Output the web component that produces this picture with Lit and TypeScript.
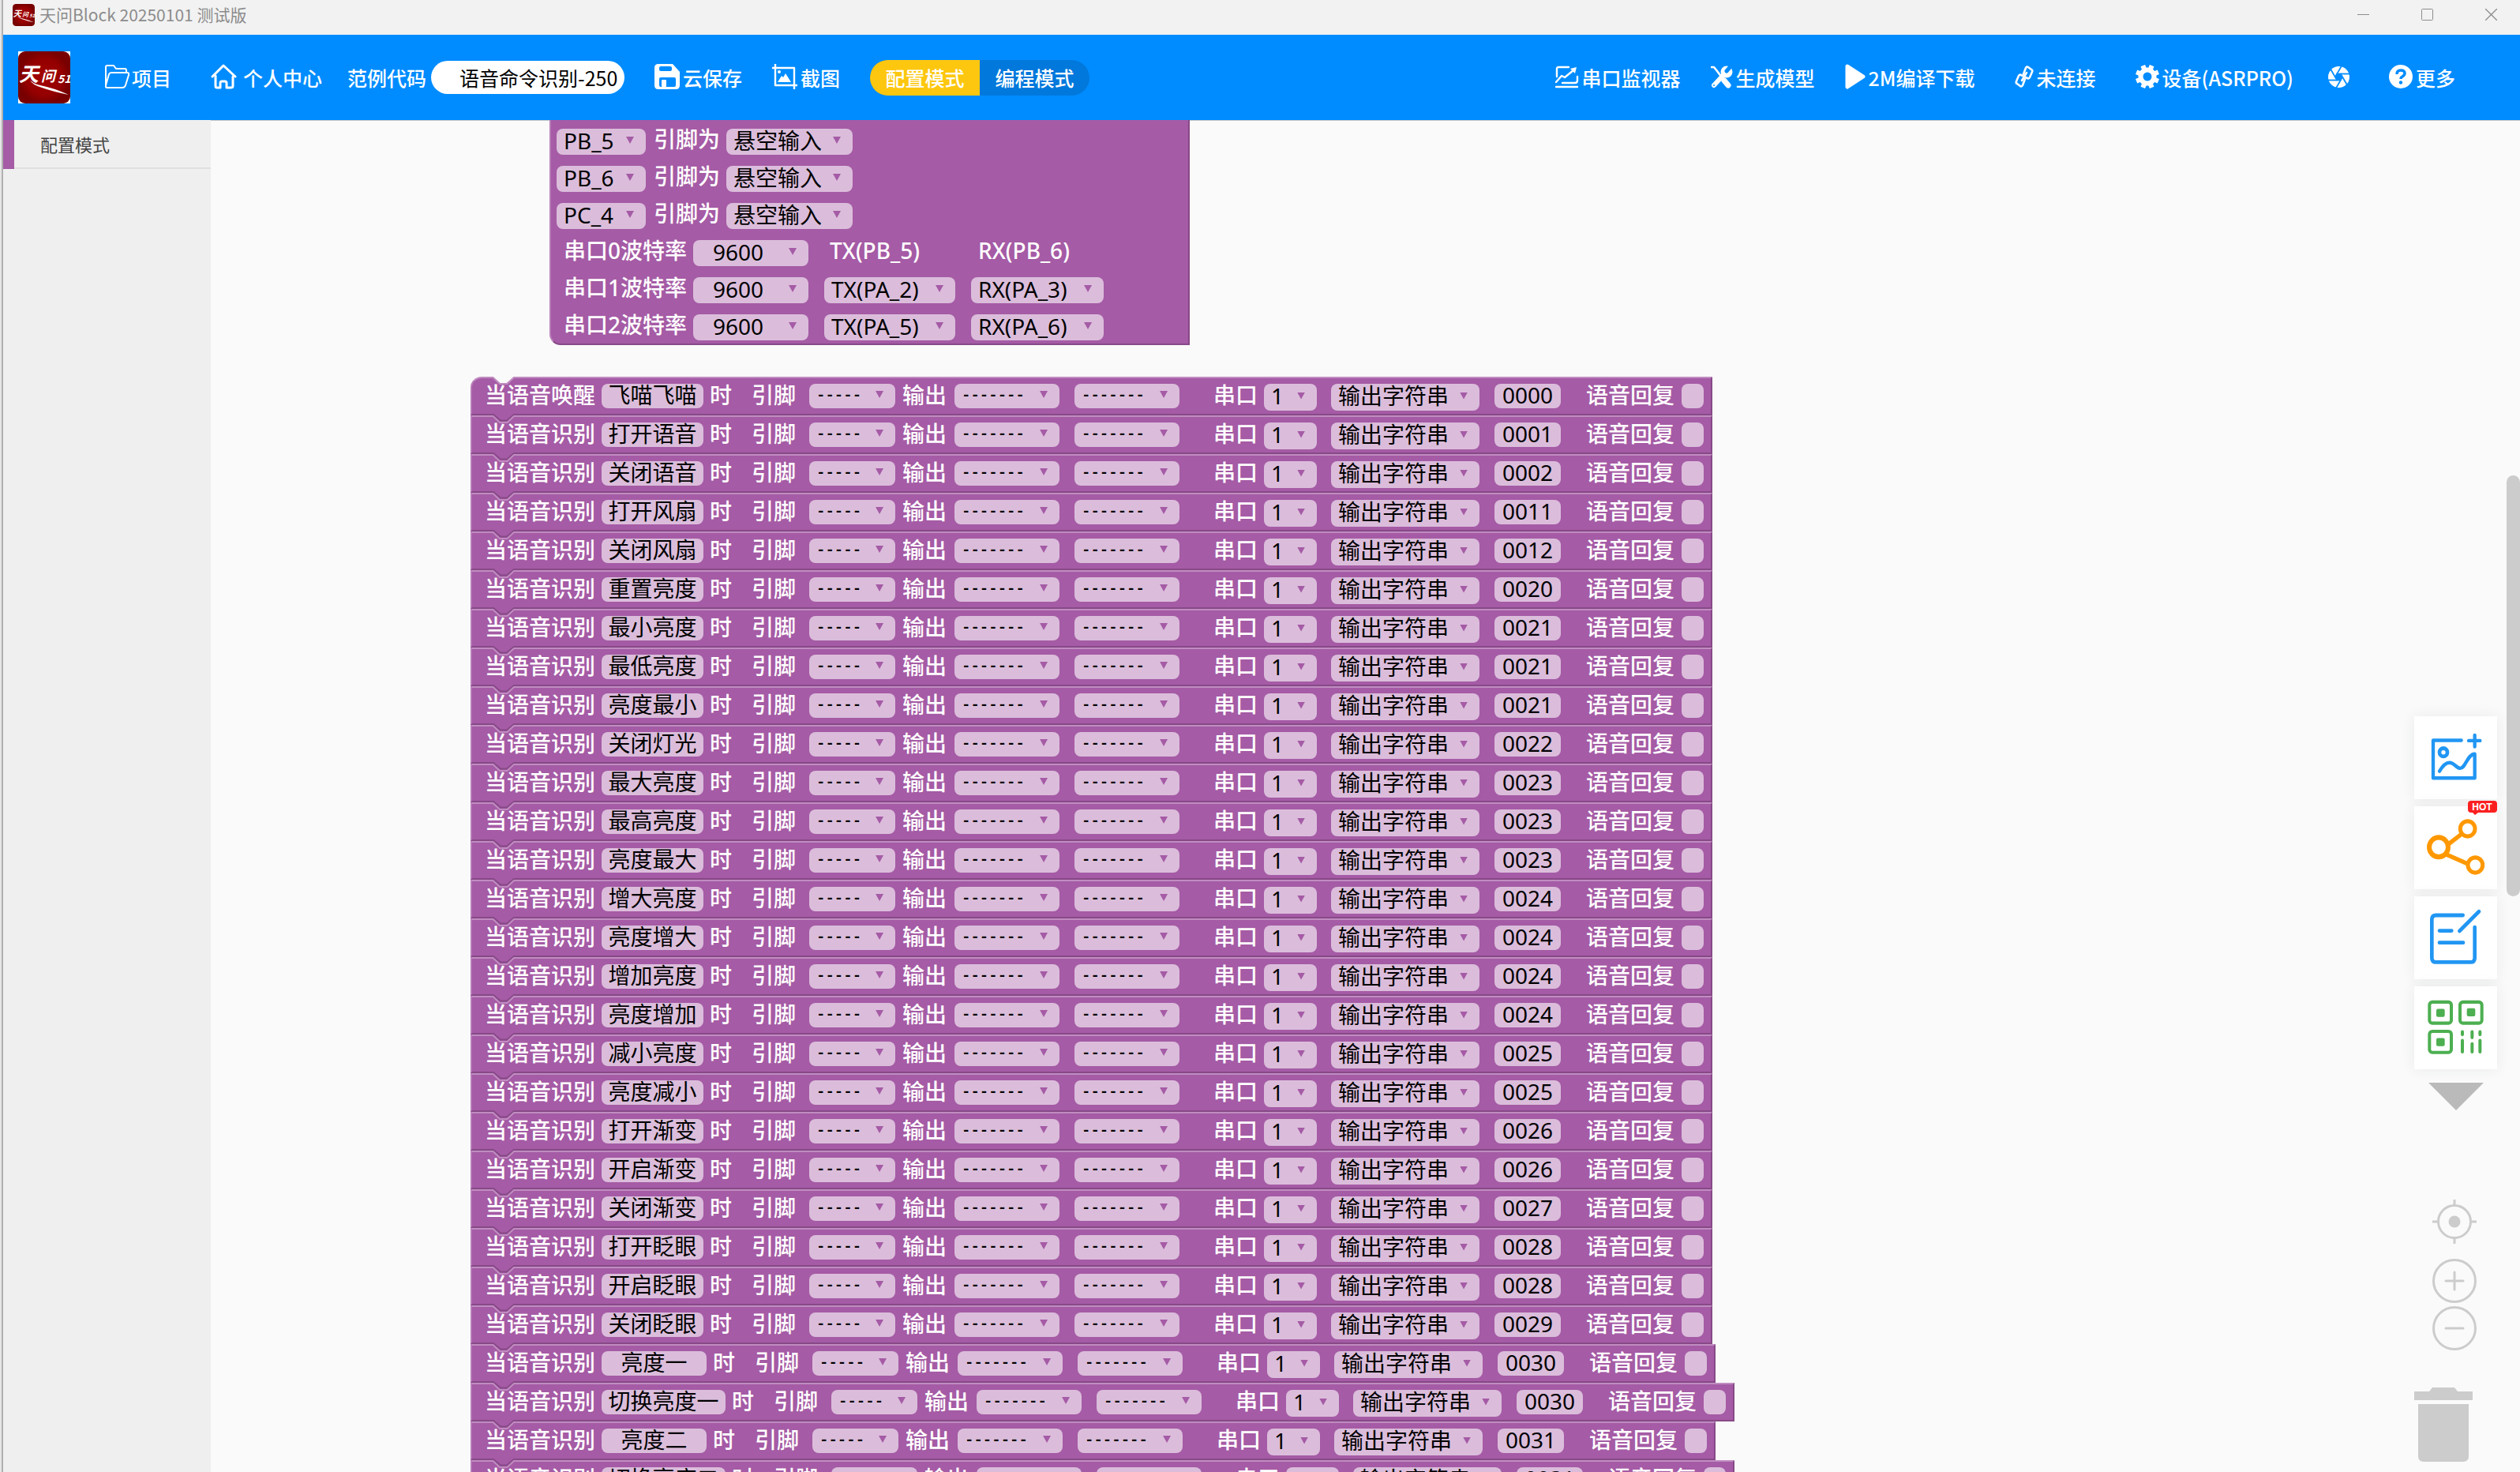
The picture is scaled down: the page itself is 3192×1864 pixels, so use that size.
import { LitElement, html, css, svg, nothing } from "lit";
import { customElement, property } from "lit/decorators.js";
import { classMap } from "lit/directives/class-map.js";

interface Command {
  trigger: string;
  phrase: string;
  code: string;
}

const wake = (phrase: string, code: string): Command => ({ trigger: "当语音唤醒", phrase, code });
const hear = (phrase: string, code: string): Command => ({ trigger: "当语音识别", phrase, code });

const COMMANDS: Command[] = [
  wake("飞喵飞喵", "0000"),
  hear("打开语音", "0001"),
  hear("关闭语音", "0002"),
  hear("打开风扇", "0011"),
  hear("关闭风扇", "0012"),
  hear("重置亮度", "0020"),
  hear("最小亮度", "0021"),
  hear("最低亮度", "0021"),
  hear("亮度最小", "0021"),
  hear("关闭灯光", "0022"),
  hear("最大亮度", "0023"),
  hear("最高亮度", "0023"),
  hear("亮度最大", "0023"),
  hear("增大亮度", "0024"),
  hear("亮度增大", "0024"),
  hear("增加亮度", "0024"),
  hear("亮度增加", "0024"),
  hear("减小亮度", "0025"),
  hear("亮度减小", "0025"),
  hear("打开渐变", "0026"),
  hear("开启渐变", "0026"),
  hear("关闭渐变", "0027"),
  hear("打开眨眼", "0028"),
  hear("开启眨眼", "0028"),
  hear("关闭眨眼", "0029"),
  hear("  亮度一  ", "0030"),
  hear("切换亮度一", "0030"),
  hear("  亮度二  ", "0031"),
  hear("切换亮度二", "0031"),
];

const PINS = ["PB_5", "PB_6", "PC_4"];

const UARTS = [
  { name: "串口0波特率", tx: "TX(PB_5)", rx: "RX(PB_6)", fixed: true },
  { name: "串口1波特率", tx: "TX(PA_2)", rx: "RX(PA_3)", fixed: false },
  { name: "串口2波特率", tx: "TX(PA_5)", rx: "RX(PA_6)", fixed: false },
];

/* Width of a text field: full-width characters, spaces, then the field padding. */
const phraseWidth = (text: string) =>
  [...text].reduce((sum, ch) => sum + (ch === " " ? 8 : 28), 17);

const icon = (w: number, h: number, body: unknown) => html`
  <svg class="icon" width=${w} height=${h} viewBox="0 0 ${w} ${h}" fill="none" stroke="#fff"
    stroke-width="3" stroke-linecap="round" stroke-linejoin="round" aria-hidden="true">${body}</svg>`;

const ICONS = {
  folder: icon(31, 30, svg`<g stroke-width="2">
    <path d="M27 10V7Q27 5 25 5H14L11 1H3Q1 1 1 3V27"/>
    <path d="M3 29Q0 29 1 26L5 12Q6 10 8 10H28Q31 10 30 13L26 26Q25 29 22 29Z"/></g>`),
  home: icon(33, 32, svg`<path d="M2 16L16 2L31 16" />
    <path d="M6 15V28Q6 30 8 30H12V24Q12 22 14 22H18Q20 22 20 24V30H25Q28 30 28 28V16"/>`),
  save: icon(32, 32, svg`<path fill="#fff" stroke="none" d="M5 0H23L32 10V27Q32 32 27 32H5Q0 32 0 27V5Q0 0 5 0Z"/>
    <rect x="6" y="3" width="16" height="6" rx="2" fill="#008cff" stroke="none"/>
    <rect x="6" y="17" width="21" height="12" rx="2" fill="#008cff" stroke="none"/>
    <rect x="9" y="20" width="6" height="9" rx="1" fill="#fff" stroke="none"/>`),
  crop: icon(32, 32, svg`<g stroke-linecap="butt"><path d="M4 0V27H32M0 5H28V32" stroke-width="2.4"/></g>
    <path d="M7 23L12 15L14 17L17 12L24 23Z" fill="#fff" stroke="none"/><circle cx="9" cy="10" r="2" fill="#fff" stroke="none"/>`),
  chart: icon(30, 29, svg`<g stroke-width="2.4"><path d="M17 2H4Q2 2 2 4V14M28 14V19Q28 22 25 22H9M1 27H28"/>
    <path d="M1 21L8 13L12 15L23 6"/></g><path d="M27 2L19 4L25 10Z" fill="#fff" stroke="none"/>`),
  tools: icon(28, 29, svg`<path d="M1 2L4 2L8 7L14 15" stroke-width="2.6"/><path d="M17 19L22 25" stroke-width="7"/>
    <path d="M4 25L17 11" stroke-width="6"/><circle cx="20" cy="8" r="7.5" fill="#fff" stroke="none"/>
    <path d="M26 0L20 7" stroke="#008cff" stroke-width="5"/><circle cx="4" cy="25" r="1" fill="#008cff" stroke="none"/>`),
  play: icon(26, 32, svg`<path d="M3 3L23 16L3 29Z" fill="#fff" stroke-width="5"/>`),
  link: icon(24, 30, svg`<g stroke-width="2.6">
    <path d="M11 12L14 4Q15 2 17 3L21 6Q23 7 22 9L19 16Q18 18 16 17L14 16"/>
    <path d="M13 18L10 26Q9 28 7 27L3 24Q1 23 2 21L5 14Q6 12 8 13L10 14"/><path d="M9 20L15 10"/></g>`),
  gear: icon(30, 30, svg`<circle cx="15" cy="15" r="8.500" stroke-width="6"/>
    <g stroke-width="6" stroke-linecap="butt">
    <path d="M9.300 1.100L11.500 6.500M20.700 1.100L18.500 6.500M28.900 9.300L23.500 11.500M28.900 20.700L23.500 18.500M20.700 28.900L18.500 23.500M9.300 28.900L11.500 23.500M1.100 20.700L6.500 18.500M1.100 9.300L6.500 11.500"/></g>`),
  aperture: icon(27, 27, svg`<circle cx="13.5" cy="13.5" r="13.5" fill="#fff" stroke="none"/>
    <g stroke="#008cff" stroke-width="1.800" stroke-linecap="butt">
    ${[0, 60, 120, 180, 240, 300].map((a) => svg`<path transform="rotate(${a} 13.5 13.5)" d="M10.500 9.500H28"/>`)}</g>
    <path d="M11 9.500H16L18.500 13.500L16 17.500H11L8.500 13.500Z" fill="#008cff" stroke="none"/>`),
  help: icon(30, 30, svg`<circle cx="15" cy="15" r="15" fill="#fff" stroke="none"/>
    <path d="M10 12Q10 7 15 7Q20 7 20 11Q20 13 17 15Q15 16 15 18" stroke="#008cff" stroke-width="3.500" stroke-linecap="butt"/>
    <circle cx="15" cy="22.500" r="2.200" fill="#008cff" stroke="none"/>`),
};

const brandMark = (size: number) => html`
  <svg class="brand" width=${size} height=${size} viewBox="0 0 66 66" role="img" aria-label="天问51">
    <defs><radialGradient id="red"><stop offset="0" stop-color="#a40000"/><stop offset="0.700" stop-color="#940000"/><stop offset="1" stop-color="#780000"/></radialGradient></defs>
    <rect width="66" height="66" fill="#fff"/>
    <rect width="66" height="66" rx="9" fill="url(#red)"/>
    <g class="brush" fill="#fff">
      <text x="1" y="38" font-size="25">天</text>
      <text x="29" y="38" font-size="18">问</text>
      <text x="50" y="40" font-size="14">51</text>
    </g>
    <path d="M15 36Q18 41 28 43Q44 46 64 55Q44 51 30 46Q17 42 15 36Z" fill="#fff"/>
  </svg>`;

/* A drop-down field of a block. */
@customElement("block-select")
class BlockSelect extends LitElement {
  @property() value = "";
  @property() label = "";

  static styles = css`
    :host { display: grid; align-items: center; height: 100%; }
    .field, .arrow { grid-area: 1 / 1; }
    .field {
      box-sizing: border-box; width: 100%; height: 100%; margin: 0; padding: 0 0 3px 9px; border: 0; border-radius: 8px;
      appearance: none; background: #dbbddb; color: #000; font: inherit; outline: none;
    }
    .arrow {
      justify-self: end; width: 10px; height: 9px; margin: 0 15px 4px 0;
      background: #a55ba5; clip-path: polygon(0 0, 100% 0, 50% 100%); pointer-events: none;
    }
    :host([wide]) .field { padding-left: 25px; }
    :host([dashes]) .field { padding-bottom: 0; font-family: "Liberation Mono", monospace; font-size: 19px; font-weight: 700; }
  `;

  render() {
    return html`
      <select class="field" aria-label=${this.label}><option>${this.value}</option></select>
      <span class="arrow"></span>`;
  }
}

@customElement("command-block")
class CommandBlock extends LitElement {
  @property({ attribute: false }) command!: Command;
  @property({ type: Boolean }) first = false;

  static styles = css`
    :host { display: block; }
    .block {
      position: relative; display: flex; align-items: center; box-sizing: border-box; height: 49px;
      padding: 0 9px 0 16px; border: 2px solid #874987; border-top-color: #c08cc0; border-left-color: #b77cb7;
      background: #a55ba5; color: #fff; white-space: nowrap; line-height: 31px;
    }
    .first { border-top-left-radius: 14px; }
    .notch { position: absolute; left: 24px; top: -4px; }
    .label { padding-bottom: 2px; font-weight: 500; }
    .text {
      box-sizing: border-box; height: 31px; margin: 0 8px; padding: 0 0 2px; border: 0; border-radius: 8px;
      background: #dbbddb; color: #000; font: inherit; text-align: center; outline: none;
    }
    .pin { margin-left: 25px; }
    block-select { height: 31px; }
    .level { width: 109px; margin: 0 9px 0 17px; }
    .kind { width: 133px; margin-left: 10px; }
    .kind.second { margin: 0 43px 0 19px; }
    .port { width: 67px; margin: 0 18px 0 8px; }
    .format { width: 188px; margin-right: 19px; }
    .code { width: 84px; margin: 0 32px 0 0; }
    .reply { width: 28px; margin: 0 0 0 9px; }
  `;

  render() {
    const { trigger, phrase, code } = this.command;
    return html`
      <div class=${classMap({ block: true, first: this.first })}>
        <svg class="notch" width="32" height="13" viewBox="0 0 32 13" fill="none" aria-hidden="true">
          ${this.first
            ? svg`<path d="M1 0H31V2L29 2L20 10H11L2 2H1Z" fill="#fafafa"/>`
            : svg`<path d="M1 0H31V5H1Z" fill="#a55ba5"/><path d="M0 1H3L12 8.500H20L29 1H32" stroke="#874987" stroke-width="2"/>`}
          <path d="M0 3H2.500L11 11H20.500L29 3H32" stroke="#c08cc0" stroke-width="2"/>
        </svg>
        <span class="label">${trigger}</span>
        <input class="text" aria-label="命令词" .value=${phrase} style="width:${phraseWidth(phrase)}px">
        <span class="label">时</span>
        <span class="label pin">引脚</span>
        <block-select class="level" dashes label="引脚" value="-----"></block-select>
        <span class="label">输出</span>
        <block-select class="kind" dashes label="输出" value="-------"></block-select>
        <block-select class="kind second" dashes label="输出参数" value="-------"></block-select>
        <span class="label">串口</span>
        <block-select class="port" label="串口" value="1"></block-select>
        <block-select class="format" label="输出格式" value="输出字符串"></block-select>
        <input class="text code" aria-label="输出内容" .value=${code}>
        <span class="label">语音回复</span>
        <input class="text reply" aria-label="语音回复">
      </div>`;
  }
}

@customElement("pin-block")
class PinBlock extends LitElement {
  static styles = css`
    :host { display: block; }
    .block {
      display: flex; flex-direction: column; gap: 17px; padding: 11px 107px 7px 7px;
      border: solid #874987; border-width: 0 2px 2px 2px; border-left-color: #b77cb7;
      border-bottom-left-radius: 14px; background: #a55ba5; color: #fff; white-space: nowrap; line-height: 30px;
    }
    .row { display: flex; align-items: center; height: 30px; }
    .label { padding-bottom: 4px; font-weight: 500; }
    .pin { width: 113px; margin-right: 10px; }
    .state { width: 160px; margin-left: 8px; }
    .uart { padding-left: 9px; }
    .rate { width: 146px; margin: 0 20px 0 8px; }
    .tx { width: 166px; margin-right: 20px; }
    .rx { width: 168px; }
    .plain { box-sizing: border-box; padding-left: 7px; }
    .rx.plain { padding-left: 9px; }
  `;

  render() {
    return html`
      <div class="block">
        ${PINS.map((pin) => html`
          <div class="row">
            <block-select class="pin" label="引脚" .value=${pin}></block-select>
            <span class="label">引脚为</span>
            <block-select class="state" label="${pin}状态" value="悬空输入"></block-select>
          </div>`)}
        ${UARTS.map((u) => html`
          <div class="row uart">
            <span class="label">${u.name}</span>
            <block-select class="rate" wide .label=${u.name} value="9600"></block-select>
            ${u.fixed
              ? html`<span class="label tx plain">${u.tx}</span><span class="label rx plain">${u.rx}</span>`
              : html`<block-select class="tx" label="TX" .value=${u.tx}></block-select>
                  <block-select class="rx" label="RX" .value=${u.rx}></block-select>`}
          </div>`)}
      </div>`;
  }
}

@customElement("app-root")
class AppRoot extends LitElement {
  static styles = css`
    :host {
      display: flex; flex-direction: column; box-sizing: border-box; height: 100vh; overflow: hidden;
      padding-left: 2px; border-left: 2px solid #e6e6e6; background: #b0b0b0;
      font-family: "Noto Sans", "Noto Sans CJK SC", sans-serif;
    }
    button { margin: 0; padding: 0; border: 0; background: none; color: inherit; font: inherit; }
    a { color: inherit; text-decoration: none; }
    svg { display: block; flex: none; }
    .brush { font-family: "Noto Sans CJK SC", sans-serif; font-weight: 700; font-style: italic; }

    .titlebar { display: flex; align-items: center; height: 44px; padding-left: 12px; background: #f2f2f2; color: #8c8c8c; }
    .titlebar .brand { border-radius: 4px; margin-bottom: 7px; }
    .title { flex: 1; margin: 0 0 8px 6px; font: 400 21px/30px "Noto Sans CJK SC", sans-serif; }
    .window { display: flex; gap: 7px; height: 37px; margin-bottom: 7px; }
    .window button { display: grid; place-items: center; width: 74px; }

    .header {
      display: flex; align-items: center; height: 108px; padding: 0 82px 0 19px; background: #008cff; color: #fff;
      font: 500 25px/36px "Noto Sans CJK SC", sans-serif; white-space: nowrap;
    }
    .item { display: flex; align-items: center; gap: 4px; }
    .item .icon { margin-bottom: 2px; }
    .left, .right { display: flex; align-items: center; }
    .left { flex: 1; padding-left: 44px; gap: 38px; }
    .project { margin-right: 12px; gap: 3px; }
    .user { gap: 8px; margin-right: -6px; }
    .example { display: flex; align-items: center; gap: 6px; }
    .name {
      box-sizing: border-box; width: 245px; height: 42px; padding: 0 8px 0 36px; border: 0; border-radius: 21px;
      background: #fff; color: #000; font: inherit; font-weight: 400; outline: none;
    }
    .modes { display: flex; height: 45px; border-radius: 23px; overflow: hidden; background: #0078dc; }
    .modes button { width: 139px; }
    .modes .active { background: #fdc70f; }
    .right { gap: 50px; }
    .right .near { margin-left: -12px; }
    .right .device { margin-right: -6px; }

    .main { flex: 1; display: flex; min-height: 0; background: #fafafa; }
    .sidebar { width: 263px; background: #efefef; }
    .category {
      display: flex; align-items: center; box-sizing: border-box; width: 100%; height: 62px; padding: 0 0 3px 33px;
      border-left: 14px solid #a55ba5; box-shadow: inset 0 -2px #e0e0e0; color: #444;
      font: 400 22px/32px "Noto Sans CJK SC", sans-serif;
    }
    .canvas { flex: 1; position: relative; overflow: hidden; font-size: 28px; }
    .canvas::before { content: ""; display: block; height: 1px; background: #c8c8c8; }
    .pins { position: absolute; left: 429px; top: 0; }
    .commands { position: absolute; left: 329px; top: 325px; display: flex; flex-direction: column; align-items: flex-start; }
    .tools { position: absolute; right: 29px; top: 755px; display: flex; flex-direction: column; align-items: center; gap: 9px; }
    .tool { position: relative; display: block; background: #fff; box-shadow: 0 0 16px rgba(40, 50, 70, 0.08); }
    .hot { position: absolute; right: 0; top: -8px; }
    .hot text { font: 700 12px "Liberation Sans", sans-serif; }
    .collapse { margin-top: 8px; }
    .zoom { position: absolute; right: 55px; bottom: 154px; display: flex; flex-direction: column; gap: 4px; }
    .center { margin-bottom: 15px; }
    .trash { position: absolute; right: 60px; bottom: 13px; }
    .scrollbar { position: absolute; right: 0; top: 450px; width: 17px; height: 533px; border-radius: 9px; background: #ccc; }
  `;

  private tool(label: string, color: string, body: unknown, badge: unknown = nothing) {
    return html`
      <button class="tool" aria-label=${label}>
        <svg width="105" height="105" viewBox="0 0 315 306" preserveAspectRatio="none" fill="none" stroke=${color}
          stroke-width="14" stroke-linecap="round" stroke-linejoin="round" aria-hidden="true">${body}</svg>
        ${badge}
      </button>`;
  }

  render() {
    return html`
      <div class="titlebar">
        ${brandMark(28)}
        <span class="title">天问Block 20250101 测试版</span>
        <div class="window">
          <button aria-label="最小化"><svg width="15" height="15" stroke="#8c8c8c" stroke-width="1"><path d="M0 7.500H15"/></svg></button>
          <button aria-label="最大化"><svg width="15" height="15" fill="none" stroke="#8c8c8c" stroke-width="1"><rect x="0.500" y="0.500" width="14" height="14" rx="1"/></svg></button>
          <button aria-label="关闭"><svg width="15" height="15" stroke="#8c8c8c" stroke-width="1.300"><path d="M0 0L15 15M15 0L0 15"/></svg></button>
        </div>
      </div>

      <header class="header">
        ${brandMark(66)}
        <nav class="left">
          <a class="item project" href="#project">${ICONS.folder}<span>项目</span></a>
          <a class="item user" href="#user">${ICONS.home}<span>个人中心</span></a>
          <div class="example">
            <label for="name">范例代码</label>
            <input class="name" id="name" .value=${"语音命令识别-250702"}>
          </div>
          <button class="item">${ICONS.save}<span>云保存</span></button>
          <button class="item">${ICONS.crop}<span>截图</span></button>
          <div class="modes">
            <button class="active" aria-pressed="true">配置模式</button>
            <button aria-pressed="false">编程模式</button>
          </div>
        </nav>
        <div class="right">
          <button class="item">${ICONS.chart}<span>串口监视器</span></button>
          <button class="item near">${ICONS.tools}<span>生成模型</span></button>
          <button class="item near">${ICONS.play}<span>2M编译下载</span></button>
          <button class="item">${ICONS.link}<span>未连接</span></button>
          <button class="item device">${ICONS.gear}<span>设备(ASRPRO)</span></button>
          <button class="item" aria-label="主题">${ICONS.aperture}</button>
          <button class="item">${ICONS.help}<span>更多</span></button>
        </div>
      </header>

      <main class="main">
        <nav class="sidebar"><button class="category">配置模式</button></nav>
        <section class="canvas" aria-label="工作区">
          <pin-block class="pins"></pin-block>
          <div class="commands">
            ${COMMANDS.map((c, i) => html`<command-block .command=${c} ?first=${i === 0}></command-block>`)}
          </div>

          <div class="tools">
            ${this.tool("添加图片", "#2196f3", svg`<g stroke-width="13">
              <path d="M179 89H72V228H230V139C202 140 195 192 175 192C160 192 152 171 134 171C118 171 106 186 96 203"/>
              <circle cx="111" cy="133" r="15" stroke-width="14"/><path d="M207 90H250M230 70V112"/></g>`)}
            ${this.tool("分享", "#ff9800", svg`<circle cx="93" cy="151" r="36" stroke-width="18"/>
              <circle cx="203" cy="83" r="28" stroke-width="15"/><circle cx="232" cy="217" r="28" stroke-width="15"/>
              <path d="M130 140L182 101M122 178L204 213" stroke-width="16" stroke-linecap="butt"/>`,
              html`<svg class="hot" width="37" height="19" viewBox="0 0 37 19" aria-hidden="true">
                <path d="M4 1H33Q37 1 37 5V12Q37 16 33 16H13L9 19L6 16H4Q0 16 0 12V5Q0 1 4 1Z" fill="#fb2020"/>
                <text x="18" y="13" text-anchor="middle" fill="#fff">HOT</text></svg>`)}
            ${this.tool("笔记", "#2196f3", svg`<path d="M185 70H83Q67 70 67 86V227Q67 243 83 243H214Q230 243 230 227V114"/>
              <path d="M96 127H142M96 171H186M172 128L246 56"/>`)}
            ${this.tool("二维码", "#4caf50", svg`<g stroke-width="12">
              <rect x="58" y="58" width="83" height="78" rx="11"/><rect x="174" y="58" width="83" height="78" rx="11"/>
              <rect x="58" y="166" width="83" height="78" rx="11"/>
              <path d="M183 168V178M183 200V242M220 168V189M220 212V242M250 168V178M250 200V242"/></g>
              <g fill="#4caf50" stroke="none"><rect x="84" y="83" width="32" height="30" rx="6"/>
              <rect x="200" y="81" width="32" height="30" rx="6"/><rect x="84" y="191" width="32" height="30" rx="6"/></g>`)}
            <button class="collapse" aria-label="展开"><svg width="70" height="35" fill="#bababa"><path d="M0 0H70L35 35Z"/></svg></button>
          </div>

          <div class="zoom">
            <button class="center" aria-label="居中"><svg width="56" height="56" fill="none" stroke="#ccc" stroke-width="3">
              <circle cx="28" cy="28" r="20.500"/><circle cx="28" cy="28" r="7.500" fill="#ccc" stroke="none"/><path d="M28 0V8M28 48V56M0 28H8M48 28H56"/></svg></button>
            <button aria-label="放大"><svg width="56" height="56" fill="none" stroke="#ccc" stroke-width="3" stroke-linecap="round">
              <circle cx="28" cy="28" r="26.500"/><path d="M17 28H39M28 17V39"/></svg></button>
            <button aria-label="缩小"><svg width="56" height="56" fill="none" stroke="#ccc" stroke-width="3" stroke-linecap="round">
              <circle cx="28" cy="28" r="26.500"/><path d="M17 28H39"/></svg></button>
          </div>
          <button class="trash" aria-label="删除"><svg width="74" height="94" fill="#ccc">
            <path d="M0 5H19L23 0H51L55 5H74V16H0ZM5 21H69V87Q69 94 62 94H12Q5 94 5 87Z"/></svg></button>
          <div class="scrollbar"></div>
        </section>
      </main>`;
  }
}
